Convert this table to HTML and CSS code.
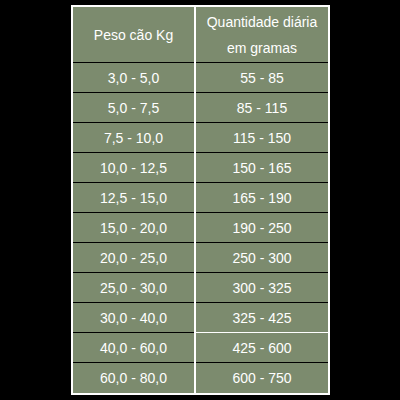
FILE: index.html
```html
<!DOCTYPE html>
<html>
<head>
<meta charset="utf-8">
<link rel="stylesheet" href="styles.css">
</head>
<body>
<div class="table">
  <div class="cell head">Peso cão Kg</div>
  <div class="cell head two">Quantidade diária<br>em gramas</div>
  <div class="cell">3,0 - 5,0</div><div class="cell">55 - 85</div>
  <div class="cell">5,0 - 7,5</div><div class="cell">85 - 115</div>
  <div class="cell">7,5 - 10,0</div><div class="cell">115 - 150</div>
  <div class="cell">10,0 - 12,5</div><div class="cell">150 - 165</div>
  <div class="cell">12,5 - 15,0</div><div class="cell">165 - 190</div>
  <div class="cell">15,0 - 20,0</div><div class="cell">190 - 250</div>
  <div class="cell">20,0 - 25,0</div><div class="cell">250 - 300</div>
  <div class="cell">25,0 - 30,0</div><div class="cell">300 - 325</div>
  <div class="cell">30,0 - 40,0</div><div class="cell white-line">325 - 425</div>
  <div class="cell">40,0 - 60,0</div><div class="cell">425 - 600</div>
  <div class="cell last">60,0 - 80,0</div><div class="cell last">600 - 750</div>
</div>
</body>
</html>
```
FILE: styles.css
```css
html, body {
  margin: 0;
  padding: 0;
  background: #000;
}
body {
  width: 400px;
  height: 400px;
  padding-top: 5px;
  padding-left: 71px;
  box-sizing: border-box;
}
.table {
  display: grid;
  grid-template-columns: 121px 132px;
  column-gap: 2px;
  width: max-content;
  background: #fff;
  padding: 2px;
  font-family: "Liberation Sans", Arial, sans-serif;
  font-size: 14px;
  color: #fff;
}
.cell {
  background: #7c8b6e;
  height: 29px;
  border-bottom: 1px solid #000;
  display: flex;
  align-items: center;
  justify-content: center;
  text-align: center;
}
.head {
  height: 55px;
  line-height: 26px;
}
.white-line {
  border-bottom-color: #fff;
}
.last {
  height: 30px;
  border-bottom: none;
}
```
